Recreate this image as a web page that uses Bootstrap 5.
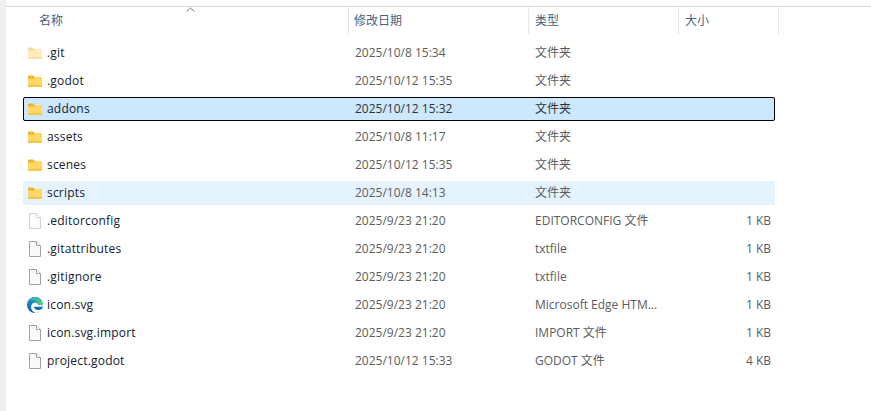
<!DOCTYPE html>
<html lang="zh">
<head>
    <meta charset="UTF-8">
    <title>文件列表</title>
    <link rel="stylesheet" href="https://cdn.jsdelivr.net/npm/bootstrap@5.3.0/dist/css/bootstrap.min.css">
    <style>
        html, body { height: 100%; }
        body {
            background: #fff;
            overflow: hidden;
            font-family: "Open Sans", "Noto Sans CJK SC", sans-serif;
            font-size: 12px;
            line-height: 16px;
        }
        .side-strip { width: 6px; background: #f0f0f0; flex: none; }
        .explorer { padding-top: 6px; }
        .head-row {
            border-top: 1px solid #d9d5cf;
            height: 28px;
            padding-left: 17px;
            color: #4c607a;
            position: relative;
        }
        .head-cell { border-right: 1px solid #e5e5e5; padding-top: 6px; height: 27px; }
        .sort-mark { position: absolute; left: 180px; top: 0; }
        .c-name { width: 326px; padding-left: 16px; }
        .c-date { width: 180px; padding-left: 5px; }
        .c-type { width: 150px; padding-left: 6px; }
        .c-size { width: 100px; padding-left: 6px; }
        .file-list { padding: 7px 0 0 17px; }
        .file-row {
            width: 752px;
            height: 24px;
            margin-bottom: 4px;
            color: #5c5c5c;
            align-items: center;
        }
        .file-row.is-hover { background: #e5f3ff; border-radius: 2px; }
        .file-row.is-selected { background: #cce8ff; outline: 1px solid #000; outline-offset: -1px; border-radius: 2px; color: #333; }
        .cell-name { width: 325px; padding-left: 4px; color: #14202e; letter-spacing: .2px; }
        .cell-name svg { margin-right: 4px; flex: none; }
        .cell-date { width: 180px; padding-left: 7px; }
        .cell-type { width: 150px; padding-left: 7px; }
        .cell-size { width: 97px; padding-right: 4px; text-align: right; }
        .is-faded svg { opacity: .45; }
    </style>
</head>
<body>
<svg width="0" height="0" class="position-absolute">
    <defs>
        <linearGradient id="edge-blue" x1="0" y1="0" x2="0" y2="1">
            <stop offset="0" stop-color="#1a8fd6"/>
            <stop offset="1" stop-color="#0b5fb0"/>
        </linearGradient>
        <linearGradient id="edge-green" x1="0" y1="0" x2="1" y2="1">
            <stop offset="0" stop-color="#25a8d8"/>
            <stop offset="1" stop-color="#66d35a"/>
        </linearGradient>
        <symbol id="ico-folder" viewBox="0 0 16 16">
            <path d="M1 3.500C1 3 1.400 2.500 2 2.500h4l1.500 1.500H15v2H1z" fill="#f0b429"/>
            <path d="M1 5.500h6l1.500-1.500H14c.6 0 1 .4 1 1v8c0 .6-.4 1-1 1H2c-.6 0-1-.4-1-1z" fill="#ffd767"/>
            <path d="M1 12h14v1c0 .6-.4 1-1 1H2c-.6 0-1-.4-1-1z" fill="#f7c544"/>
        </symbol>
        <symbol id="ico-file" viewBox="0 0 16 16">
            <path d="M2.500.5h7l4 4v11h-11z" fill="#fafafa" stroke="#a0a0a0"/>
            <path d="M9.500.5v4h4" fill="#fff" stroke="#a0a0a0"/>
        </symbol>
        <symbol id="ico-edge" viewBox="0 0 16 16">
            <circle cx="8" cy="8" r="8" fill="url(#edge-blue)"/>
            <path d="M8 0C4 0 1 2.500 .2 6 2 3.500 5 3 7 3.500c3 .6 4.500 2.500 4.500 4.500h4.500c0-4.500-3.500-8-8-8z" fill="url(#edge-green)"/>
            <path d="M16 8c0 .9-1 1.800-2.500 1.800H6.800c.2 1.700 2 3.200 4.200 3.200 1.700 0 3-.5 4.300-1.500C14 14.500 11.500 16 9.500 15.900 6.500 15.500 4 13 4 10c0-2.500 1.800-4.500 4.300-4.500 1.500 0 2.700 1 2.900 2.500H16z" fill="#fff"/>
        </symbol>
    </defs>
</svg>
<div class="d-flex h-100">
    <div class="side-strip"></div>
    <div class="explorer flex-grow-1">
        <div class="head-row d-flex">
            <svg class="sort-mark" width="9" height="6" viewBox="0 0 9 6"><path d="M.5 4.500 4.500 1l4 3.500" fill="none" stroke="#777"/></svg>
            <div class="head-cell c-name">名称</div>
            <div class="head-cell c-date">修改日期</div>
            <div class="head-cell c-type">类型</div>
            <div class="head-cell c-size">大小</div>
        </div>
        <div class="file-list" id="fileList"></div>
    </div>
</div>
<script>
    const files = [
        ['.git', '2025/10/8 15:34', '文件夹', '', 'folder', 'is-faded'],
        ['.godot', '2025/10/12 15:35', '文件夹', '', 'folder', ''],
        ['addons', '2025/10/12 15:32', '文件夹', '', 'folder', 'is-selected'],
        ['assets', '2025/10/8 11:17', '文件夹', '', 'folder', ''],
        ['scenes', '2025/10/12 15:35', '文件夹', '', 'folder', ''],
        ['scripts', '2025/10/8 14:13', '文件夹', '', 'folder', 'is-hover'],
        ['.editorconfig', '2025/9/23 21:20', 'EDITORCONFIG 文件', '1 KB', 'file', 'is-faded'],
        ['.gitattributes', '2025/9/23 21:20', 'txtfile', '1 KB', 'file', ''],
        ['.gitignore', '2025/9/23 21:20', 'txtfile', '1 KB', 'file', ''],
        ['icon.svg', '2025/9/23 21:20', 'Microsoft Edge HTM...', '1 KB', 'edge', ''],
        ['icon.svg.import', '2025/9/23 21:20', 'IMPORT 文件', '1 KB', 'file', ''],
        ['project.godot', '2025/10/12 15:33', 'GODOT 文件', '4 KB', 'file', '']
    ];
    document.getElementById('fileList').innerHTML = files.map(f => `
        <div class="file-row d-flex ${f[5]}">
            <div class="cell-name d-flex align-items-center"><svg width="16" height="16"><use href="#ico-${f[4]}"/></svg>${f[0]}</div>
            <div class="cell-date">${f[1]}</div>
            <div class="cell-type">${f[2]}</div>
            <div class="cell-size">${f[3]}</div>
        </div>`).join('');
</script>
<script src="https://cdn.jsdelivr.net/npm/bootstrap@5.3.0/dist/js/bootstrap.bundle.min.js"></script>
</body>
</html>
